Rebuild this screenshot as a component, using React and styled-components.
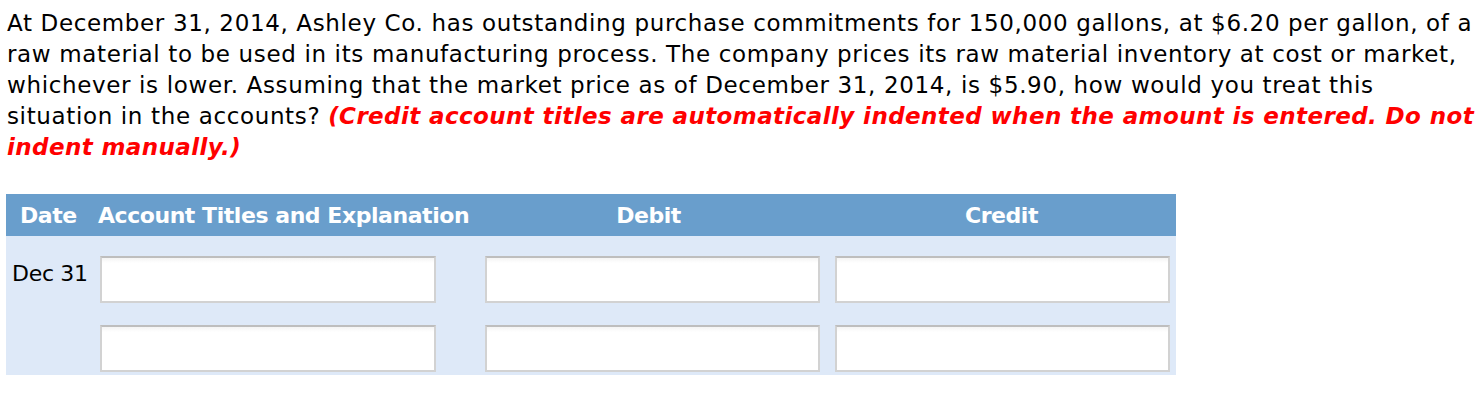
import React from "react";
import styled, { createGlobalStyle } from "styled-components";

const Global = createGlobalStyle`
  html, body { margin: 0; padding: 0; background: #fff; }
  body { font-family: "DejaVu Sans", Verdana, sans-serif; color: #000; }
`;

const Page = styled.div`
  padding: 8px 6px 0 7px;
`;

const Question = styled.p`
  margin: 0;
  font-size: 23px;
  line-height: 31px;
  letter-spacing: 0.64px;
  white-space: nowrap;
`;

const Note = styled.strong`
  color: #f00;
  font-style: italic;
  font-weight: bold;
  letter-spacing: 0.4px;
`;

const Table = styled.table`
  margin-top: 31px;
  margin-left: -1px;
  width: 1170px;
  table-layout: fixed;
  border-collapse: collapse;
  background: #dee9f8;
  font-family: Tahoma, "DejaVu Sans", sans-serif;
`;

const Col = styled.col`
  width: ${(p) => p.$w}px;
`;

const Head = styled.th`
  background: #699ecc;
  color: #fff;
  font-size: 22px;
  font-weight: bold;
  height: 42px;
  padding: 0 0 0 ${(p) => p.$pl || 0}px;
  text-align: ${(p) => p.$align || "center"};
  letter-spacing: -0.45px;
  white-space: nowrap;
`;

const Cell = styled.td`
  padding: ${(p) => p.$pt || 0}px 0 ${(p) => p.$pb || 0}px ${(p) => p.$pl || 0}px;
  vertical-align: top;
`;

const DateText = styled.div`
  font-size: 22px;
  padding-top: 5px;
  padding-left: 6px;
  letter-spacing: -0.3px;
`;

const Field = styled.input`
  display: block;
  box-sizing: border-box;
  width: ${(p) => p.$w}px;
  height: 47px;
  border: 2px solid #d2d2d2;
  border-top-color: #bebebe;
  background: linear-gradient(#f4f4f4, #fff 5px);
  margin: 0;
  padding: 0 6px;
  font-size: 18px;
  outline: none;
`;

const rows = [{ date: "Dec 31" }, { date: "" }];

export default function App() {
  return (
    <>
      <Global />
      <Page>
        <Question>
          At December 31, 2014, Ashley Co. has outstanding purchase commitments for 150,000 gallons, at $6.20 per gallon, of a
          <br />
          raw material to be used in its manufacturing process. The company prices its raw material inventory at cost or market,
          <br />
          whichever is lower. Assuming that the market price as of December 31, 2014, is $5.90, how would you treat this
          <br />
          situation in the accounts?{" "}
          <Note>
            (Credit account titles are automatically indented when the amount is entered. Do not
            <br />
            indent manually.)
          </Note>
        </Question>
        <Table>
          <colgroup>
            <Col $w={92} />
            <Col $w={372} />
            <Col $w={357} />
            <Col $w={349} />
          </colgroup>
          <thead>
            <tr>
              <Head $align="left" $pl={14}>Date</Head>
              <Head $align="left" $pl={0}>Account Titles and Explanation</Head>
              <Head>Debit</Head>
              <Head>Credit</Head>
            </tr>
          </thead>
          <tbody>
            {rows.map((r, i) => (
              <tr key={i}>
                <Cell $pt={i === 0 ? 20 : 22} $pb={i === 1 ? 3 : 0}>
                  <DateText>{r.date}</DateText>
                </Cell>
                <Cell $pt={i === 0 ? 20 : 22} $pb={i === 1 ? 3 : 0} $pl={2}>
                  <Field $w={336} />
                </Cell>
                <Cell $pt={i === 0 ? 20 : 22} $pb={i === 1 ? 3 : 0} $pl={15}>
                  <Field $w={335} />
                </Cell>
                <Cell $pt={i === 0 ? 20 : 22} $pb={i === 1 ? 3 : 0} $pl={8}>
                  <Field $w={335} />
                </Cell>
              </tr>
            ))}
          </tbody>
        </Table>
      </Page>
    </>
  );
}
